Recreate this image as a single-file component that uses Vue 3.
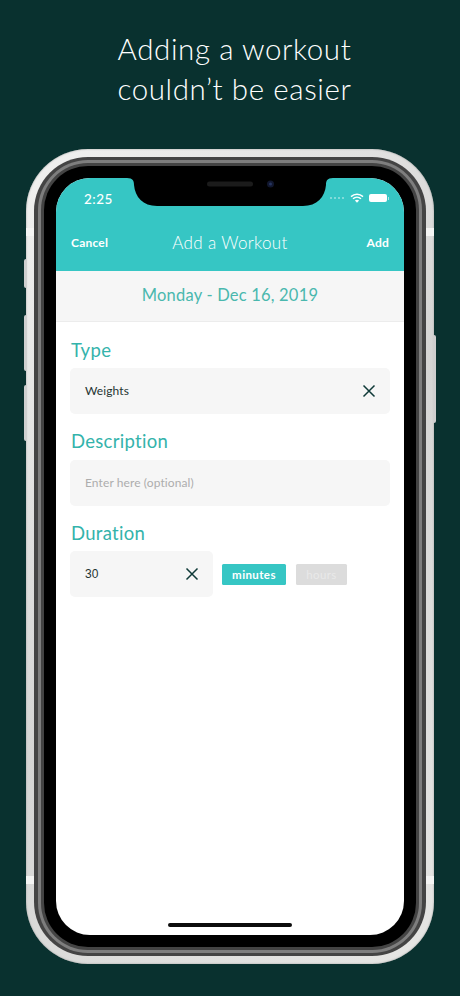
<script setup>
const antennas = ['a-tl', 'a-tr', 'a-bl', 'a-br']
const sideKeys = ['k-mute', 'k-up', 'k-down', 'k-power']
</script>

<template>
  <main class="page">
    <h1 class="headline">Adding a workout<br />couldn’t be easier</h1>
    <div class="phone">
      <i v-for="k in sideKeys" :key="k" class="key" :class="k"></i>
      <div class="band b1">
        <div class="band b2">
          <div class="band b3">
            <div class="band b4">
              <div class="band b5">
                <div class="screen">
                  <svg class="notch" viewBox="0 0 206 29" width="206" height="29">
                    <path d="M0 0H206C200 0 199 3 199 7C198 19 190 28 176 28H30C16 28 8 19 7 7C7 3 6 0 0 0Z" fill="#000" />
                    <rect x="80" y="3.500" width="46" height="5" rx="2.500" fill="#1b1b1b" />
                    <circle cx="143.500" cy="6" r="3.500" fill="#11172e" />
                    <circle cx="143.500" cy="6" r="1.500" fill="#26345f" />
                  </svg>
                  <header class="top">
                    <div class="status">
                      <span class="time">2:25</span>
                      <div class="status-icons">
                        <span class="dots"><i></i><i></i><i></i><i></i></span>
                        <svg class="wifi" viewBox="0 0 14 10" width="14" height="10">
                          <path d="M1 3.600C4.500 .4 9.500 .4 13 3.600M3 5.800C5.300 3.800 8.700 3.800 11 5.800" fill="none" stroke="#fff" stroke-width="1.500" />
                          <path d="M4.900 7.500C6.100 6.500 7.900 6.500 9.100 7.500L7 9.800Z" fill="#fff" />
                        </svg>
                        <span class="battery"></span>
                      </div>
                    </div>
                    <nav class="nav">
                      <span class="nav-action">Cancel</span>
                      <span class="nav-title">Add a Workout</span>
                      <span class="nav-action end">Add</span>
                    </nav>
                  </header>
                  <div class="date">Monday - Dec 16, 2019</div>
                  <section class="form">
                    <h2 class="label">Type</h2>
                    <div class="field first">
                      <span class="value">Weights</span>
                      <svg class="close" viewBox="0 0 14 14" width="14" height="14"><path d="M1.500 1.500L12.500 12.500M12.500 1.500L1.500 12.500" stroke="#0f3a38" stroke-width="1.500" fill="none" /></svg>
                    </div>
                    <h2 class="label roomy">Description</h2>
                    <div class="field tight">
                      <span class="placeholder">Enter here (optional)</span>
                    </div>
                    <h2 class="label">Duration</h2>
                    <div class="duration">
                      <div class="field short">
                        <span class="value num">30</span>
                        <svg class="close" viewBox="0 0 14 14" width="14" height="14"><path d="M1.500 1.500L12.500 12.500M12.500 1.500L1.500 12.500" stroke="#0f3a38" stroke-width="1.500" fill="none" /></svg>
                      </div>
                      <span class="chip on">minutes</span>
                      <span class="chip off">hours</span>
                    </div>
                  </section>
                  <div class="home"></div>
                </div>
              </div>
            </div>
          </div>
        </div>
      </div>
      <i v-for="a in antennas" :key="a" class="antenna" :class="a"></i>
    </div>
  </main>
</template>

<style>
html, body { margin: 0; background: #09312f; }
</style>

<style scoped>
.page {
  width: 460px;
  height: 996px;
  overflow: hidden;
  background: #09312f;
  font-family: Lato, "Open Sans", sans-serif;
  box-sizing: border-box;
  padding-top: 29px;
}
.headline {
  margin: 0;
  padding-left: 9px;
  color: #fff;
  font-weight: 300;
  font-size: 29.500px;
  line-height: 40px;
  letter-spacing: .6px;
  text-align: center;
}
.phone {
  position: relative;
  width: 408px;
  height: 815px;
  margin: 40px 0 0 26px;
}
.band { box-sizing: border-box; width: 100%; height: 100%; }
.b1 {
  padding: 8px;
  border-radius: 62px;
  background: linear-gradient(135deg, #f1f1f0 0%, #d5d5d4 50%, #e6e6e4 100%);
  box-shadow: inset 0 0 2px #9a9a9a;
}
.b2 { padding: 3px 4px; border-radius: 54px; background: #444; }
.b3 { padding: 3px; border-radius: 50px; background: #7e7e7e; }
.b4 { padding: 3px; border-radius: 47px; background: #444; }
.b5 { padding: 12px; border-radius: 44px; background: #000; }
.screen {
  position: relative;
  width: 100%;
  height: 100%;
  overflow: hidden;
  border-radius: 34px;
  background: #fff;
  display: flex;
  flex-direction: column;
}
.notch { position: absolute; top: 0; left: 71px; }
.top { height: 93px; background: #36c6c4; color: #fff; flex: none; }
.status {
  display: flex;
  justify-content: space-between;
  align-items: center;
  height: 41px;
  padding: 0 15px 0 28px;
}
.time { font-size: 13.500px; font-weight: 500; letter-spacing: .5px; }
.status-icons { display: flex; align-items: center; gap: 5px; margin-top: -1px; }
.dots { display: flex; gap: 2px; margin-right: 1px; }
.dots i { width: 2px; height: 2px; border-radius: 50%; background: rgba(255, 255, 255, .5); }
.battery { position: relative; width: 18px; height: 8px; border-radius: 2px; background: #fff; margin-right: 2px; }
.battery::after {
  content: "";
  position: absolute;
  right: -2px;
  top: 3px;
  width: 1px;
  height: 3px;
  background: rgba(255, 255, 255, .6);
}
.nav {
  display: grid;
  grid-template-columns: 1fr auto 1fr;
  align-items: center;
  height: 46px;
  padding: 0 15px;
}
.nav-action { font-size: 12px; font-weight: 700; letter-spacing: .2px; }
.end { text-align: right; }
.nav-title { font-size: 17px; font-weight: 300; letter-spacing: .35px; }
.date {
  flex: none;
  box-sizing: border-box;
  height: 51px;
  line-height: 49px;
  text-align: center;
  background: #f6f6f6;
  border-bottom: 1px solid #ececec;
  color: #4ab8ae;
  font-size: 16.500px;
  letter-spacing: .2px;
}
.form { padding: 16px 14px 0; }
.label {
  margin: 0 0 6px;
  height: 24px;
  line-height: 24px;
  color: #34b3ab;
  font-size: 18.500px;
  font-weight: 400;
  letter-spacing: .3px;
  padding-left: 1px;
}
.roomy { margin-bottom: 7px; }
.field {
  box-sizing: border-box;
  height: 46px;
  padding: 0 14px 2px 15px;
  display: flex;
  justify-content: space-between;
  align-items: center;
  background: #f6f6f6;
  border-radius: 5px;
}
.first { margin-bottom: 15px; }
.tight { margin-bottom: 15px; }
.close { margin-top: 2px; }
.value { font-size: 12px; color: #1f3432; letter-spacing: .1px; }
.num { font-family: "Liberation Sans", Arial, sans-serif; font-size: 12px; margin-top: 2px; }
.placeholder { font-size: 12px; color: #adadad; letter-spacing: .1px; }
.duration { display: flex; align-items: center; }
.short { width: 143px; margin-right: 9px; flex: none; }
.chip {
  box-sizing: border-box;
  height: 21px;
  line-height: 21px;
  text-align: center;
  border-radius: 1.500px;
  font-size: 11.500px;
  letter-spacing: .4px;
  color: #fff;
}
.on { width: 64px; margin-right: 10px; background: #36c6c4; font-weight: 700; }
.off { width: 51px; background: #dcdcdc; color: #e9e9e9; }
.home {
  position: absolute;
  left: 112px;
  bottom: 8px;
  width: 124px;
  height: 4px;
  border-radius: 2px;
  background: #0c0c0c;
}
.key { position: absolute; width: 3px; background: #cfcfcf; border-radius: 2px 0 0 2px; }
.k-mute { left: -2px; top: 110px; height: 29px; }
.k-up { left: -2px; top: 166px; height: 56px; }
.k-down { left: -2px; top: 236px; height: 56px; }
.k-power { right: -2px; top: 186px; height: 88px; border-radius: 0 2px 2px 0; }
.antenna { position: absolute; width: 8px; height: 8px; background: #f4f4f3; }
.a-tl { left: 0; top: 79px; }
.a-tr { right: 0; top: 79px; }
.a-bl { left: 0; top: 727px; }
.a-br { right: 0; top: 727px; }
</style>
